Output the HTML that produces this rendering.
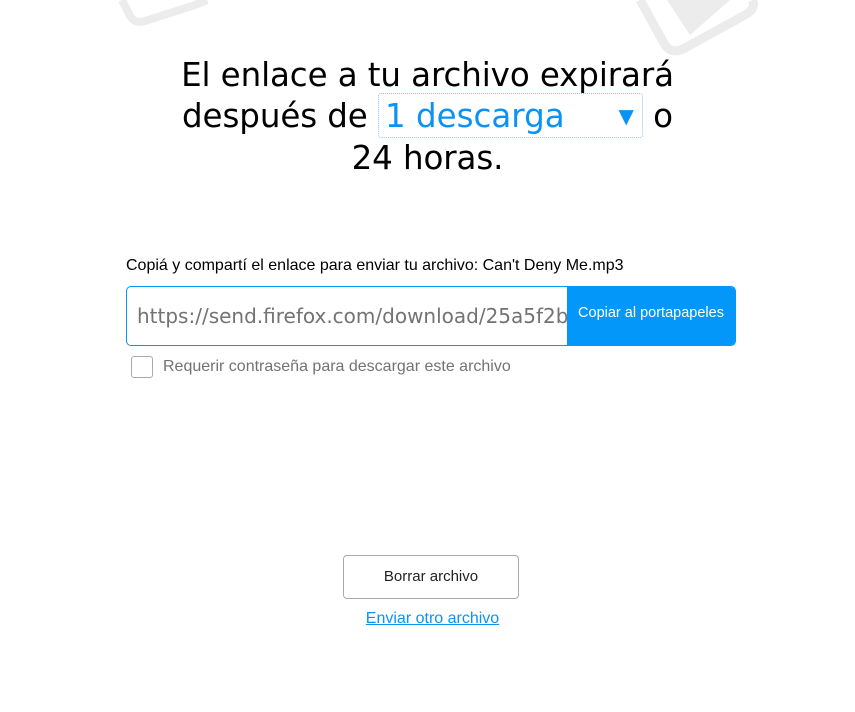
<!DOCTYPE html>
<html><head><meta charset="utf-8"><style>
body{margin:0;width:855px;height:712px;background:#fff;position:relative;overflow:hidden;font-family:"Liberation Sans",sans-serif}
.t{position:absolute;left:0;width:855px;top:55px;text-align:center;font-family:"DejaVu Sans",sans-serif;font-size:32.5px;line-height:41px;color:#000;letter-spacing:-0.1px}
.sel{display:inline-block;width:265px;height:45px;border:1px dotted #8cc4f0;border-radius:3px;color:#0a93f5;text-align:left;vertical-align:middle;position:relative;line-height:45px;box-sizing:border-box;padding-left:6px;margin-top:-6px;letter-spacing:0}
.sel span{position:absolute;right:8px;top:0;font-size:20px}
.lbl{position:absolute;left:126px;top:257px;font-size:16px;color:#000}
.inp{position:absolute;left:126px;top:286px;width:608px;height:58px;border:1px solid #0297f8;border-radius:5px;overflow:hidden}
.inp .u{position:absolute;left:10px;top:17px;font-family:"DejaVu Sans",sans-serif;font-size:20px;color:#737373;white-space:nowrap;width:430px;overflow:hidden}
.inp .b{position:absolute;left:440px;top:0;right:0;bottom:0;background:#0297f8;color:#fff;font-size:14.5px;text-align:center;line-height:52px}
.cb{position:absolute;left:131px;top:356px;width:20px;height:20px;border:1px solid #aaa;border-radius:3px}
.cl{position:absolute;left:163px;top:358px;font-size:16px;color:#737373}
.del{position:absolute;left:343px;top:555px;width:174px;height:42px;border:1px solid #aaa;border-radius:4px;text-align:center;line-height:42px;font-size:15px;color:#222}
.lnk{position:absolute;left:0;width:855px;text-align:center;top:610px;font-size:16px;color:#0a93f5;text-decoration:underline;padding-left:10px;box-sizing:border-box}
</style></head><body>
<svg style="position:absolute;left:0;top:0" width="855" height="80">
<path d="M122 0 L130 16 Q135 24 145 21 L195 5 L207 0" fill="none" stroke="#ececec" stroke-width="8"/>
<path d="M640 0 L665 45 Q672 55 685 48 L745 15 Q757 8 752 0" fill="none" stroke="#ececec" stroke-width="9"/>
<path d="M667 0 L690 35 L730 0 Z" fill="#ececec"/>
</svg>
<div class="t">El enlace a tu archivo expirará<br>después de <span class="sel">1 descarga<span>▼</span></span> o<br>24 horas.</div>
<div class="lbl">Copiá y compartí el enlace para enviar tu archivo: Can't Deny Me.mp3</div>
<div class="inp"><div class="u">https://send.firefox.com/download/25a5f2b3c</div><div class="b">Copiar al portapapeles</div></div>
<div class="cb"></div><div class="cl">Requerir contraseña para descargar este archivo</div>
<div class="del">Borrar archivo</div>
<div class="lnk">Enviar otro archivo</div>
</body></html>
